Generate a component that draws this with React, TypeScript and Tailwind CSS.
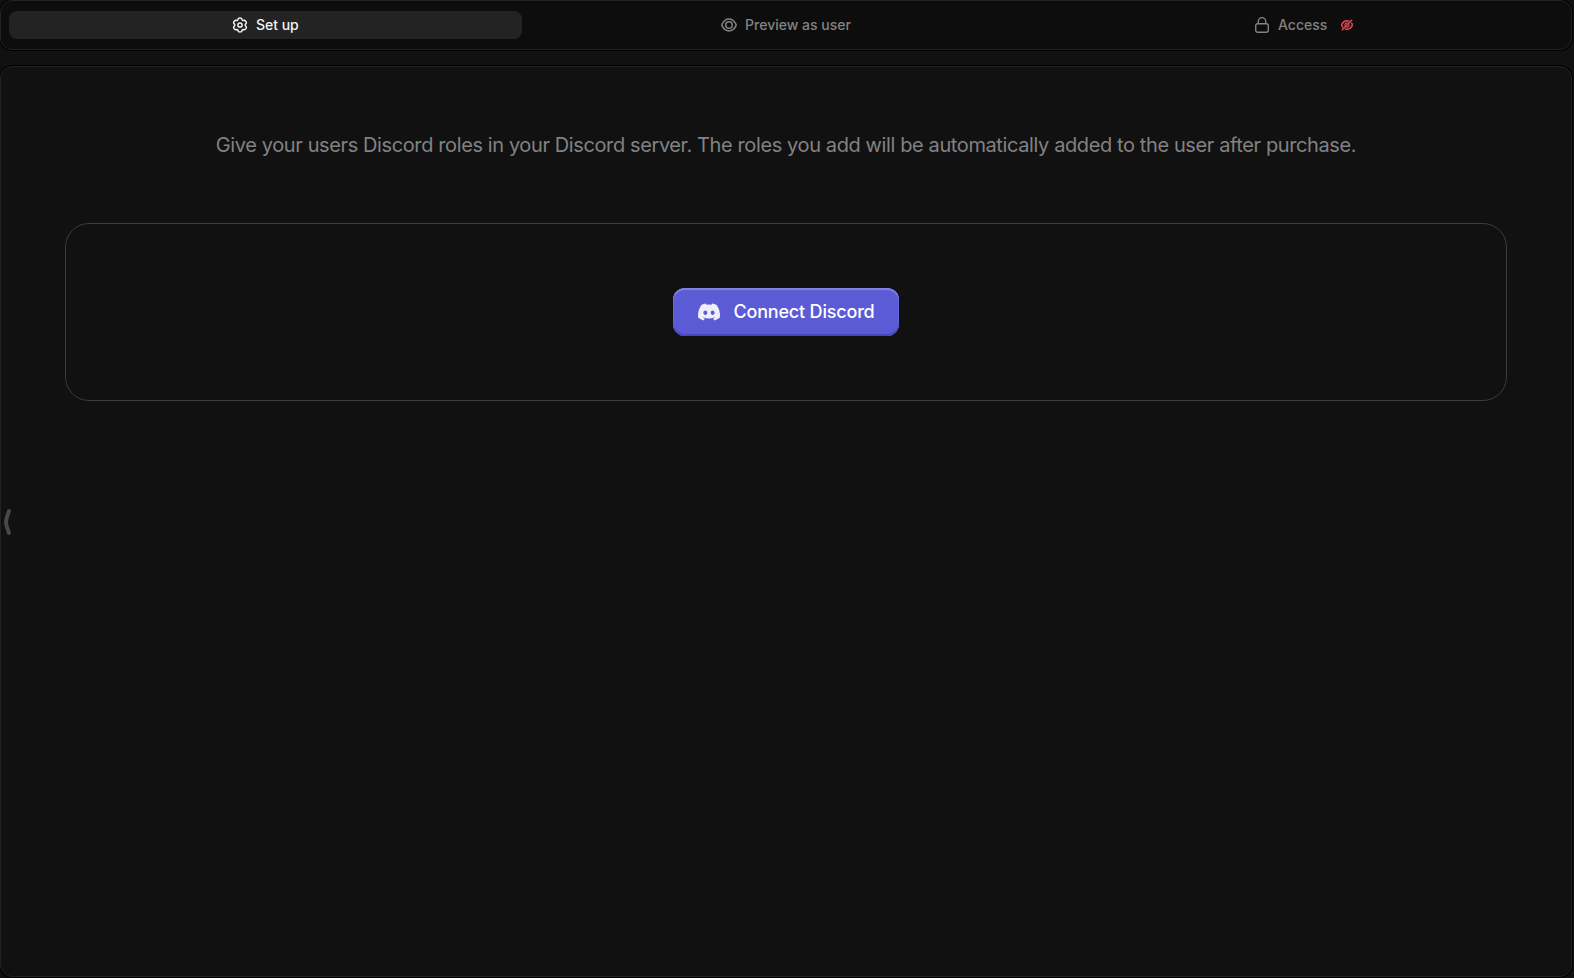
import type { ReactNode } from 'react';
import { FaDiscord } from 'react-icons/fa';

function GearIcon() {
  return (
    <svg className="h-4 w-4" viewBox="0 0 16 16" fill="none" stroke="currentColor" strokeWidth="1.5" strokeLinejoin="round">
      <path d="M6.500 1.300Q8 .5 9.500 1.300L10.200 2.900Q10.500 3.400 11.100 3.400L12.800 3.300Q14.300 4.200 14.400 5.800L13.400 7.300Q13 8 13.400 8.700L14.400 10.200Q14.300 11.800 12.800 12.700L11.100 12.600Q10.500 12.600 10.200 13.100L9.500 14.700Q8 15.500 6.500 14.700L5.800 13.100Q5.500 12.600 4.900 12.600L3.200 12.700Q1.700 11.800 1.600 10.200L2.600 8.700Q3 8 2.600 7.300L1.600 5.800Q1.700 4.200 3.200 3.300L4.900 3.400Q5.500 3.400 5.800 2.900Z" />
      <circle cx="8" cy="8" r="2.1" />
    </svg>
  );
}

function EyeIcon() {
  return (
    <svg className="h-4 w-4" viewBox="0 0 16 16" fill="none" stroke="currentColor" strokeWidth="1.5" strokeLinejoin="round">
      <path d="M1 7.300C2.600 4 5 2 8 2s5.400 2 7 5.300q.3.700 0 1.400C13.400 12 11 14 8 14S2.600 12 1 8.700q-.3-.7 0-1.400Z" />
      <circle cx="8" cy="8" r="3.300" />
    </svg>
  );
}

function LockIcon() {
  return (
    <svg className="h-4 w-4" viewBox="0 0 16 16" fill="none" stroke="currentColor" strokeWidth="1.4">
      <rect x="1.700" y="6.700" width="12.600" height="8.600" rx="2" />
      <path d="M4.300 6.700V4.300a3.700 3.700 0 0 1 7.400 0v2.400" />
    </svg>
  );
}

function HiddenIcon() {
  return (
    <svg className="h-3 w-3 text-[#e5484d]" viewBox="0 0 12 12" fill="none" stroke="currentColor" strokeWidth="1.5" strokeLinecap="round">
      <path d="M7.800 2C4.800 1.100 2.200 2.700.8 5.300q-.3.700 0 1.400.4.800.9 1.300M10.600 4.300q.4.500.6 1 .3.700 0 1.400C9.800 9.300 7.200 10.900 4.400 10.100" />
      <path d="M6.300 3.900A2.200 2.200 0 0 0 3.900 6.300M8.100 5.800A2.200 2.200 0 0 1 5.800 8.100" strokeWidth="1.2" />
      <path d="M10.700 1.300 1.300 10.700" />
    </svg>
  );
}

interface TabProps {
  icon: ReactNode;
  label: string;
  active?: boolean;
  badge?: ReactNode;
}

function Tab({ icon, label, active, badge }: TabProps) {
  return (
    <button
      className={`flex h-7 flex-1 items-center justify-center gap-2 rounded-lg text-sm font-medium ${
        active ? 'bg-[#232323] text-[#f2f2f2]' : 'text-[#828282]'
      }`}
    >
      {icon}
      <span>{label}</span>
      {badge && <span className="mx-1.5">{badge}</span>}
    </button>
  );
}

export default function App() {
  return (
    <div className="flex h-screen flex-col gap-4 overflow-hidden bg-[#111111] pr-0.5 pb-px font-['Inter',sans-serif]">
      {/* Tabs */}
      <nav className="flex h-[50px] shrink-0 items-center gap-2 rounded-xl border border-[#232323] bg-[#0d0d0d] px-2 shadow-[0_0_0_1px_#000]">
        <Tab icon={<GearIcon />} label="Set up" active />
        <Tab icon={<EyeIcon />} label="Preview as user" />
        <Tab icon={<LockIcon />} label="Access" badge={<HiddenIcon />} />
      </nav>

      {/* Content */}
      <main className="relative flex-1 rounded-xl border border-[#232323] bg-[#111111] px-16 pt-16 shadow-[0_0_0_1px_#000]">
        <p className="text-center text-xl leading-7 tracking-[-0.39px] text-[#828282]">
          Give your users Discord roles in your Discord server. The roles you add will be automatically added to the user after purchase.
        </p>
        <section className="mt-16 flex h-[178px] items-center justify-center rounded-3xl border border-[#3c3c3c]">
          <button className="flex h-12 w-[226px] items-center justify-center gap-3 rounded-xl bg-[#5b5bd6] text-lg font-medium tracking-[-0.18px] text-white shadow-[inset_0_2px_1px_#8282e0,inset_0_-2px_1px_#4747bd,inset_0_0_0_1px_#6868dc]">
            <FaDiscord className="h-6 w-6 text-[#efeffb]" />
            Connect Discord
          </button>
        </section>

        {/* Sidebar handle */}
        <svg
          className="absolute top-[441px] left-[2px] h-7 w-2.5"
          viewBox="0 0 10 28"
          fill="none"
          stroke="#484848"
          strokeWidth="4"
          strokeLinecap="round"
          strokeLinejoin="round"
        >
          <path d="M6 3Q3 11 3 14T6 25" />
        </svg>
      </main>
    </div>
  );
}
